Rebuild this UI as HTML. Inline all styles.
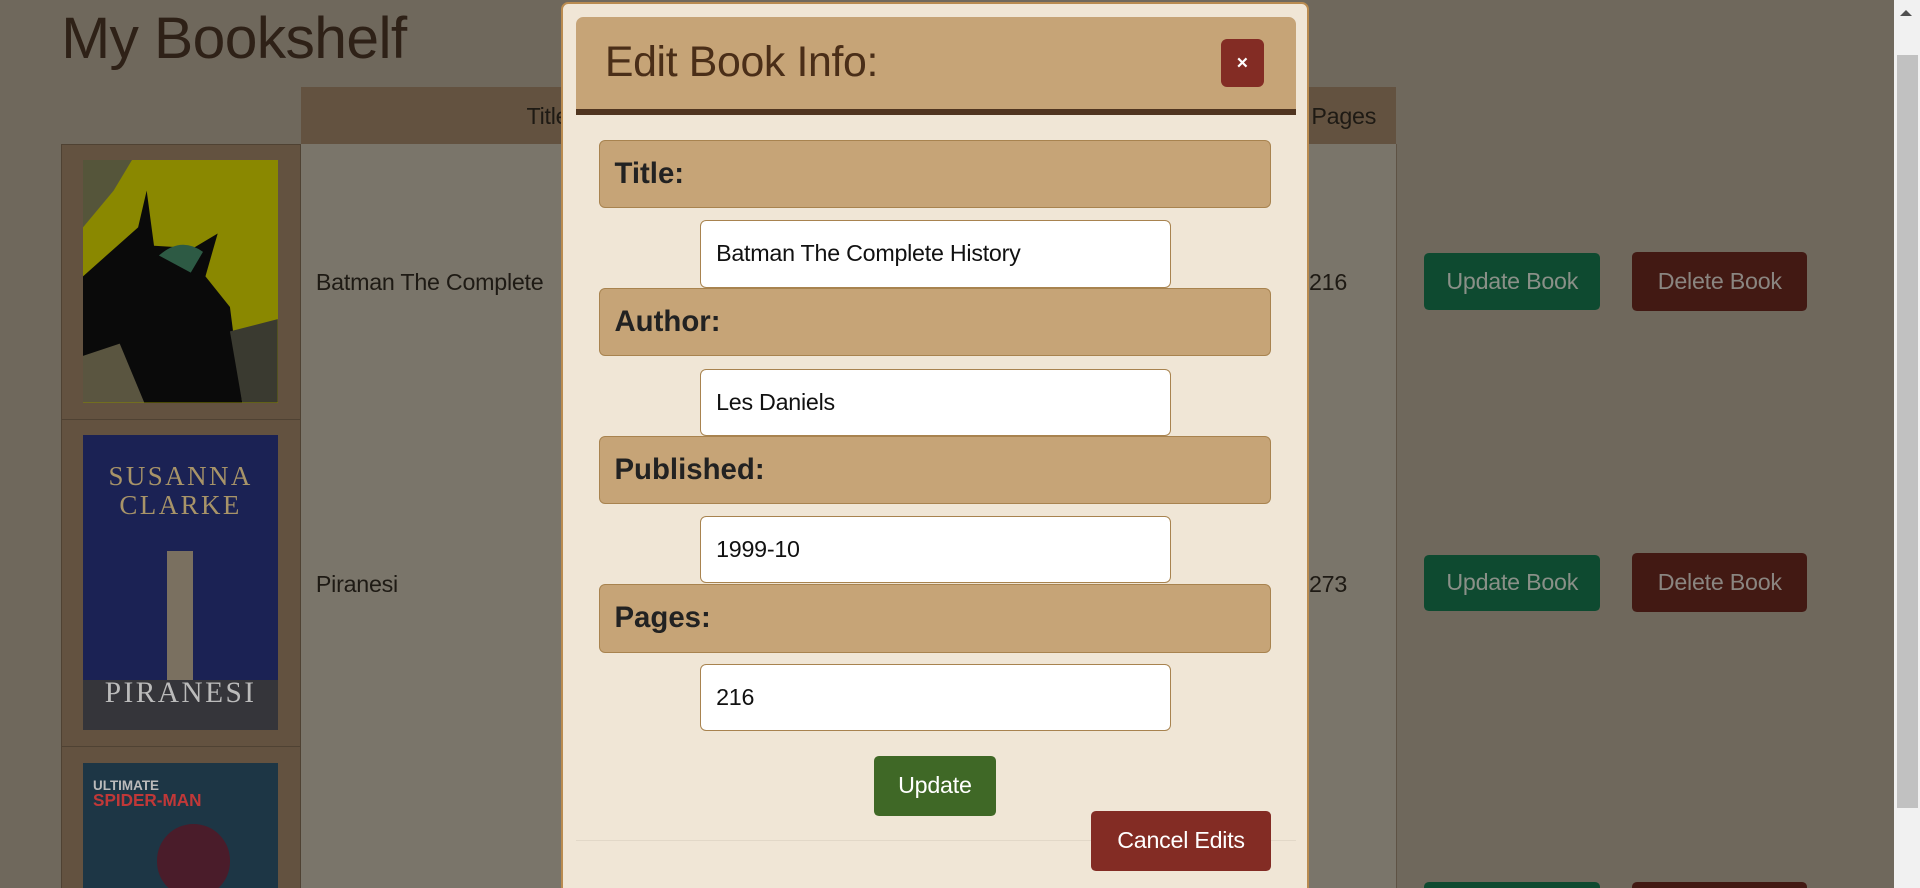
<!DOCTYPE html>
<html><head><meta charset="utf-8"><style>
html,body{margin:0;padding:0;width:1920px;height:888px;overflow:hidden;background:#6f685c;}
#w{zoom:1.22449;position:relative;width:1568px;height:725px;font-family:"Liberation Sans",Arial,sans-serif;background:#6f685c;overflow:hidden}
.a{position:absolute;box-sizing:border-box}
h1{position:absolute;left:50px;top:4px;margin:0;font-weight:normal;font-size:48px;color:#2e2117;letter-spacing:-0.5px}
.cell{position:absolute;background:#7a756a;border-bottom:1px solid #5e5244}
.t{position:absolute;font-size:19px;color:#1e1a14;letter-spacing:-0.2px}
.btn{position:absolute;border-radius:4px;font-size:19px;display:flex;align-items:center;justify-content:center;box-sizing:border-box;letter-spacing:-0.2px}
.lab{position:absolute;left:489px;width:549px;height:56px;background:#c6a477;border:1px solid #a8834f;border-radius:5px;box-sizing:border-box;font-weight:bold;font-size:24px;color:#222;padding-left:12px;line-height:54px}
.inp{position:absolute;left:572px;width:384px;height:55px;background:#fff;border:1px solid #a8834f;border-radius:5px;box-sizing:border-box;font-size:19px;color:#111;padding-left:12px;line-height:53px;letter-spacing:-0.2px}
</style></head><body><div id="w">
<h1>My Bookshelf</h1>
<div class="a" style="left:246px;top:71px;width:894px;height:47px;background:#635240"></div>
<div class="t" style="left:430px;top:84px">Title</div>
<div class="t" style="left:1071px;top:84px">Pages</div>
<div class="a" style="left:50px;top:118px;width:196px;height:620px;background:#635240;border:1px solid #4f4233"></div>
<div class="cell" style="left:246px;top:118px;width:894px;height:225px;border-right:1px solid #5e5244"></div>
<div class="cell" style="left:246px;top:343px;width:894px;height:267px;border-right:1px solid #5e5244"></div>
<div class="cell" style="left:246px;top:610px;width:894px;height:120px;border-right:1px solid #5e5244"></div>
<div class="a" style="left:50px;top:342px;width:196px;height:1px;background:#4f4233"></div>
<div class="a" style="left:50px;top:609px;width:196px;height:1px;background:#4f4233"></div>
<div class="a" style="left:68px;top:131px;width:159px;height:198px;background:#8a8800;overflow:hidden">
<svg width="159" height="198"><rect width="159" height="198" fill="#8a8800"/><path d="M0 0L40 0L25 25L0 55Z" fill="#55553a"/><path d="M0 95L45 55L52 25L58 70L90 72L110 60L100 95L120 120L130 198L0 198Z" fill="#0a0a0a"/><path d="M62 78Q80 62 98 75L88 92Z" fill="#2d5a44"/><path d="M0 160L30 150L50 198L0 198Z" fill="#5a5540"/><path d="M120 140L159 130L159 198L130 198Z" fill="#3a3a30"/></svg></div>
<div class="t" style="left:258px;top:220px">Batman The Complete</div>
<div class="t" style="left:1069px;top:220px">216</div>
<div class="a" style="left:68px;top:355px;width:159px;height:241px;background:#1b2254;overflow:hidden">
<div style="color:#a89468;font-family:'Liberation Serif',serif;font-size:22px;text-align:center;margin-top:22px;letter-spacing:2px;line-height:24px">SUSANNA<br>CLARKE</div>
<div style="position:absolute;left:68px;top:95px;width:22px;height:110px;background:#7a7060"></div>
<div style="position:absolute;left:0;top:200px;width:159px;height:41px;background:#35353a"></div>
<div style="position:absolute;left:0;top:198px;width:159px;color:#bbb;font-family:'Liberation Serif',serif;font-size:24px;text-align:center;letter-spacing:2px">PIRANESI</div></div>
<div class="t" style="left:258px;top:466px">Piranesi</div>
<div class="t" style="left:1069px;top:466px">273</div>
<div class="a" style="left:68px;top:623px;width:159px;height:110px;background:#1d3645;overflow:hidden">
<div style="color:#bbb;font-size:11px;font-weight:bold;margin:12px 0 0 8px;line-height:13px">ULTIMATE<br><span style="color:#c03838;font-size:14px">SPIDER-MAN</span></div>
<div style="position:absolute;left:60px;top:50px;width:60px;height:60px;background:#4a1c2a;border-radius:30px"></div></div>
<div class="btn" style="left:1163px;top:207px;width:144px;height:46px;background:#0e4a30;color:#8a9088">Update Book</div>
<div class="btn" style="left:1333px;top:206px;width:143px;height:48px;background:#421913;color:#8a8580">Delete Book</div>
<div class="btn" style="left:1163px;top:453px;width:144px;height:46px;background:#0e4a30;color:#8a9088">Update Book</div>
<div class="btn" style="left:1333px;top:452px;width:143px;height:48px;background:#421913;color:#8a8580">Delete Book</div>
<div class="btn" style="left:1163px;top:720px;width:144px;height:46px;background:#0e4a30"></div>
<div class="btn" style="left:1333px;top:720px;width:143px;height:48px;background:#421913"></div>
<div class="a" style="left:1547px;top:0;width:21px;height:725px;background:#f1f1f1"></div>
<div class="a" style="left:1549px;top:45px;width:17px;height:615px;background:#c1c1c1"></div>
<div class="a" style="left:1552px;top:8px;width:0;height:0;border-left:5px solid transparent;border-right:5px solid transparent;border-bottom:5px solid #505050"></div>
<div class="a" style="left:458px;top:2px;width:611px;height:740px;background:#f0e6d6;border:2px solid #b98b50;border-radius:6px"></div>
<div class="a" style="left:470px;top:14px;width:588px;height:80px;background:#c6a477;border-radius:6px 6px 0 0;border-bottom:5px solid #503520"></div>
<div class="a" style="left:494px;top:31px;font-size:35px;color:#4a2e18;letter-spacing:-0.3px">Edit Book Info:</div>
<div class="btn" style="left:997px;top:32px;width:35px;height:39px;background:#832c24;color:#fff;font-weight:bold;font-size:16px;border-radius:5px">×</div>
<div class="lab" style="top:114px">Title:</div>
<div class="inp" style="top:180px">Batman The Complete History</div>
<div class="lab" style="top:235px">Author:</div>
<div class="inp" style="top:301px">Les Daniels</div>
<div class="lab" style="top:356px">Published:</div>
<div class="inp" style="top:421px">1999-10</div>
<div class="lab" style="top:477px">Pages:</div>
<div class="inp" style="top:542px">216</div>
<div class="btn" style="left:714px;top:617px;width:99px;height:49px;background:#3f6826;color:#fff">Update</div>
<div class="a" style="left:470px;top:686px;width:588px;height:1px;background:#e2d8c8"></div>
<div class="btn" style="left:891px;top:662px;width:147px;height:49px;background:#832c24;color:#fff">Cancel Edits</div>
</div></body></html>
